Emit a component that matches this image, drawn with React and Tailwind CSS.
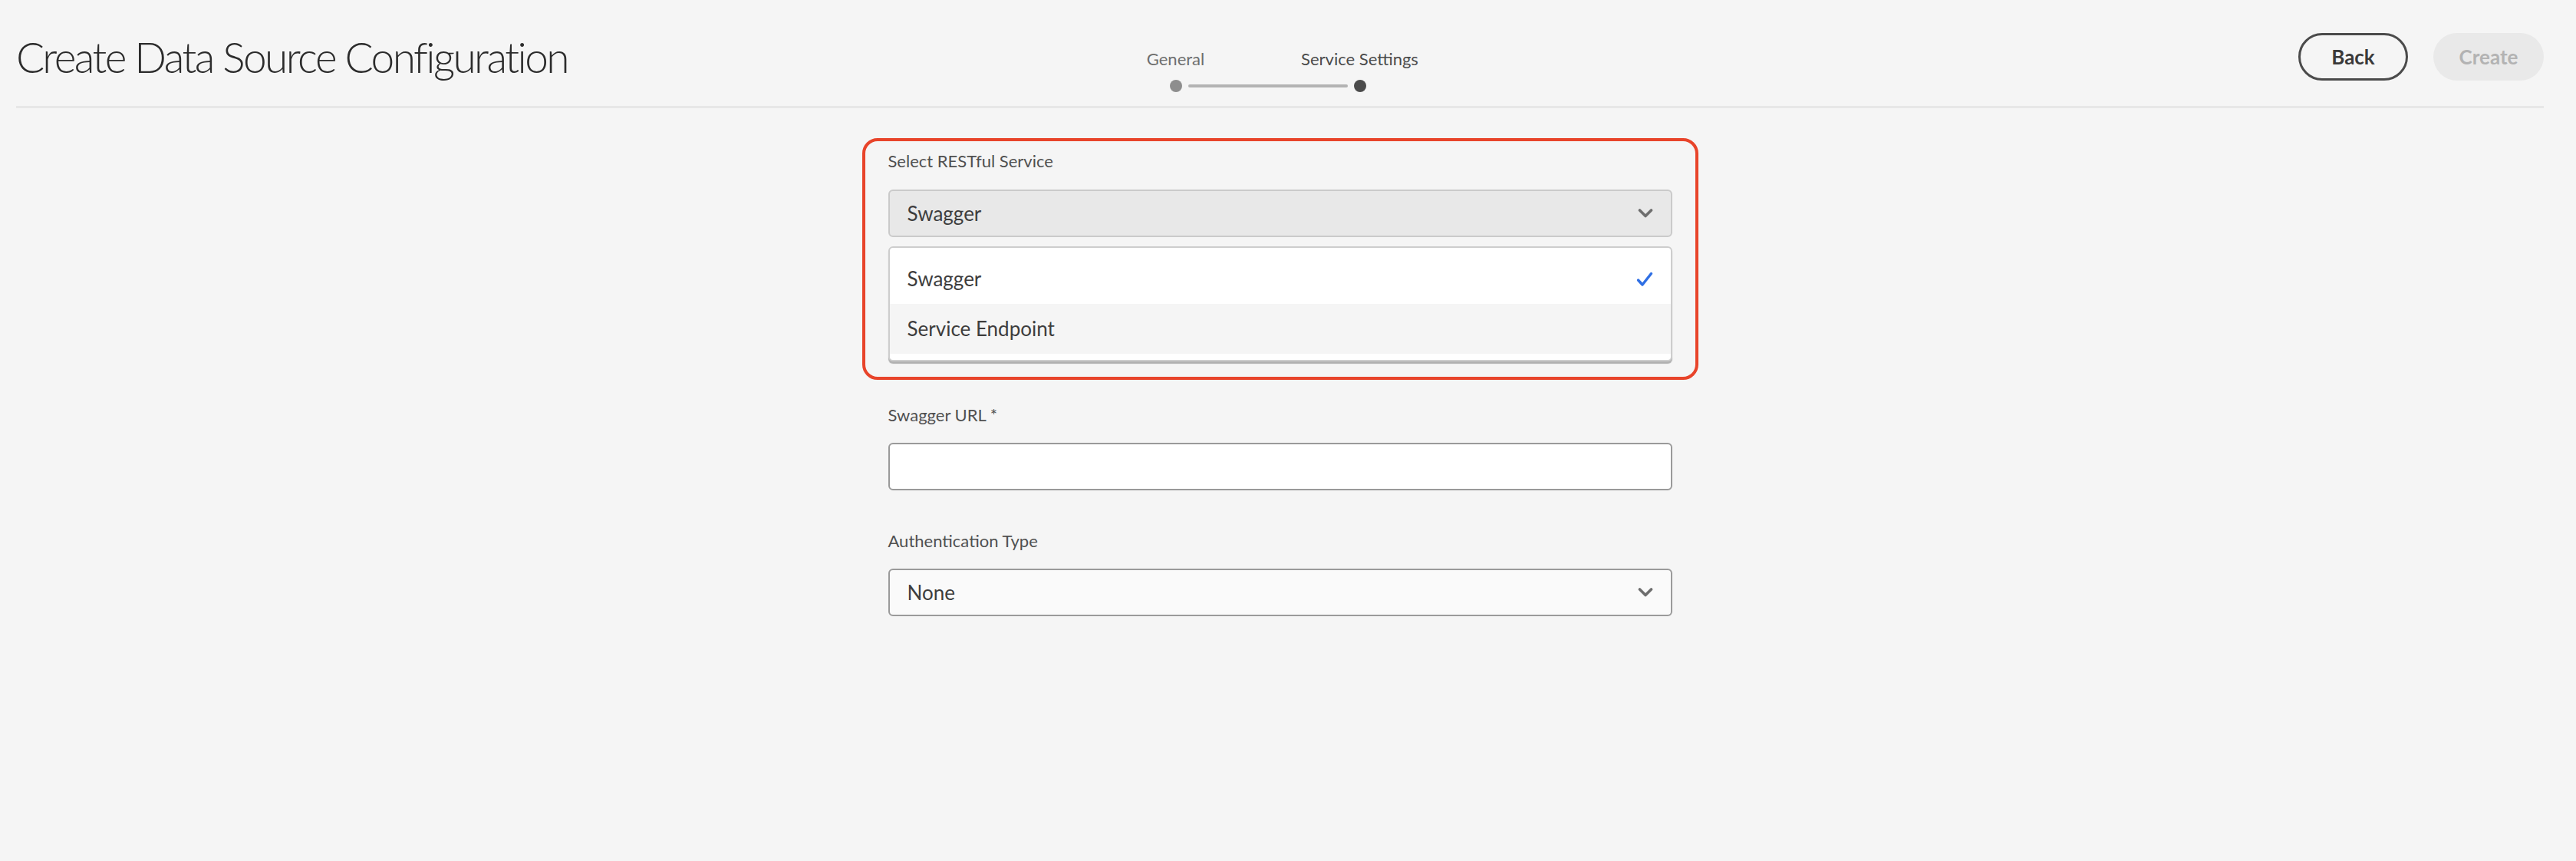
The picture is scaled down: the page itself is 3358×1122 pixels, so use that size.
import React from "react";

function Chevron() {
  return (
    <svg width="20" height="12" viewBox="0 0 20 12" fill="none">
      <polyline points="2.5,2 10,9.5 17.5,2" stroke="#6e6e6e" strokeWidth="3.6" strokeLinecap="round" strokeLinejoin="round" />
    </svg>
  );
}

function Check() {
  return (
    <svg width="22" height="20" viewBox="0 0 22 20" fill="none">
      <polyline points="2.5,11 8,17 19.5,2.5" stroke="#2f6fe4" strokeWidth="3.4" strokeLinecap="round" strokeLinejoin="round" />
    </svg>
  );
}

export default function App() {
  const font = { fontFamily: "Lato, 'Open Sans', sans-serif" };
  return (
    <div className="min-h-[1122px] w-full bg-[#f5f5f5]" style={font}>
      <div className="pl-[21px] pr-[42px]">
        <header className="flex items-start pt-[43px]">
          <div className="flex-1">
            <h1 className="text-[55px] font-light leading-[62px] tracking-[-2.55px] text-[#2c2c2c] whitespace-nowrap">
              Create Data Source Configuration
            </h1>
          </div>
          <div className="mt-[20px] mr-[32px] w-[480px]">
            <div className="grid grid-cols-2 text-center text-[22px] leading-[28px]">
              <span className="text-[#6e6e6e]">General</span>
              <span className="text-[#4b4b4b]">Service Settings</span>
            </div>
            <div className="mt-[13px] flex items-center px-[112px]">
              <span className="h-[16px] w-[16px] shrink-0 rounded-full bg-[#8e8e8e]" />
              <span className="mx-[8px] h-[4px] flex-1 rounded-full bg-[#b3b3b3]" />
              <span className="h-[16px] w-[16px] shrink-0 rounded-full bg-[#4b4b4b]" />
            </div>
          </div>
          <div className="flex flex-1 justify-end gap-[33px]">
            <button className="h-[62px] w-[143px] rounded-full border-[3px] border-[#4b4b4b] text-[26px] font-bold text-[#3a3a3a]">
              Back
            </button>
            <button className="h-[62px] w-[144px] rounded-full bg-[#e9e9e9] text-[26px] font-bold text-[#b3b3b3]">
              Create
            </button>
          </div>
        </header>
        <div className="mt-[18px] h-[3px] bg-[#e7e7e7]" />

        <main className="mx-auto mt-[39px] w-[1022px]">
          <div className="-mx-[34px] rounded-[20px] border-[4px] border-[#e8442a] px-[30px] pb-[20px] pt-[12px]">
            <label className="block text-[22px] leading-[28px] text-[#505050]">Select RESTful Service</label>
            <div className="mt-[23px] flex h-[62px] items-center justify-between rounded-[6px] border-2 border-[#cacaca] bg-[#e8e8e8] px-[23px]">
              <span className="text-[26px] text-[#3d3d3d]">Swagger</span>
              <Chevron />
            </div>
            <div className="mt-[12px] rounded-[6px] border-2 border-[#cdcdcd] bg-white py-[8px] shadow-[0_3px_1px_rgba(0,0,0,0.28)]">
              <div className="flex h-[65px] items-center justify-between px-[23px]">
                <span className="text-[26px] text-[#3d3d3d]">Swagger</span>
                <Check />
              </div>
              <div className="flex h-[65px] items-center bg-[#f5f5f5] px-[23px]">
                <span className="text-[26px] text-[#3d3d3d]">Service Endpoint</span>
              </div>
            </div>
          </div>

          <label className="mt-[32px] block text-[22px] leading-[28px] text-[#505050]">Swagger URL *</label>
          <div className="mt-[22px] h-[62px] rounded-[6px] border-2 border-[#9a9a9a] bg-white" />

          <label className="mt-[52px] block text-[22px] leading-[28px] text-[#505050]">Authentication Type</label>
          <div className="mt-[22px] flex h-[62px] items-center justify-between rounded-[6px] border-2 border-[#9a9a9a] bg-[#fafafa] px-[23px]">
            <span className="text-[26px] text-[#3d3d3d]">None</span>
            <Chevron />
          </div>
        </main>
      </div>
    </div>
  );
}
